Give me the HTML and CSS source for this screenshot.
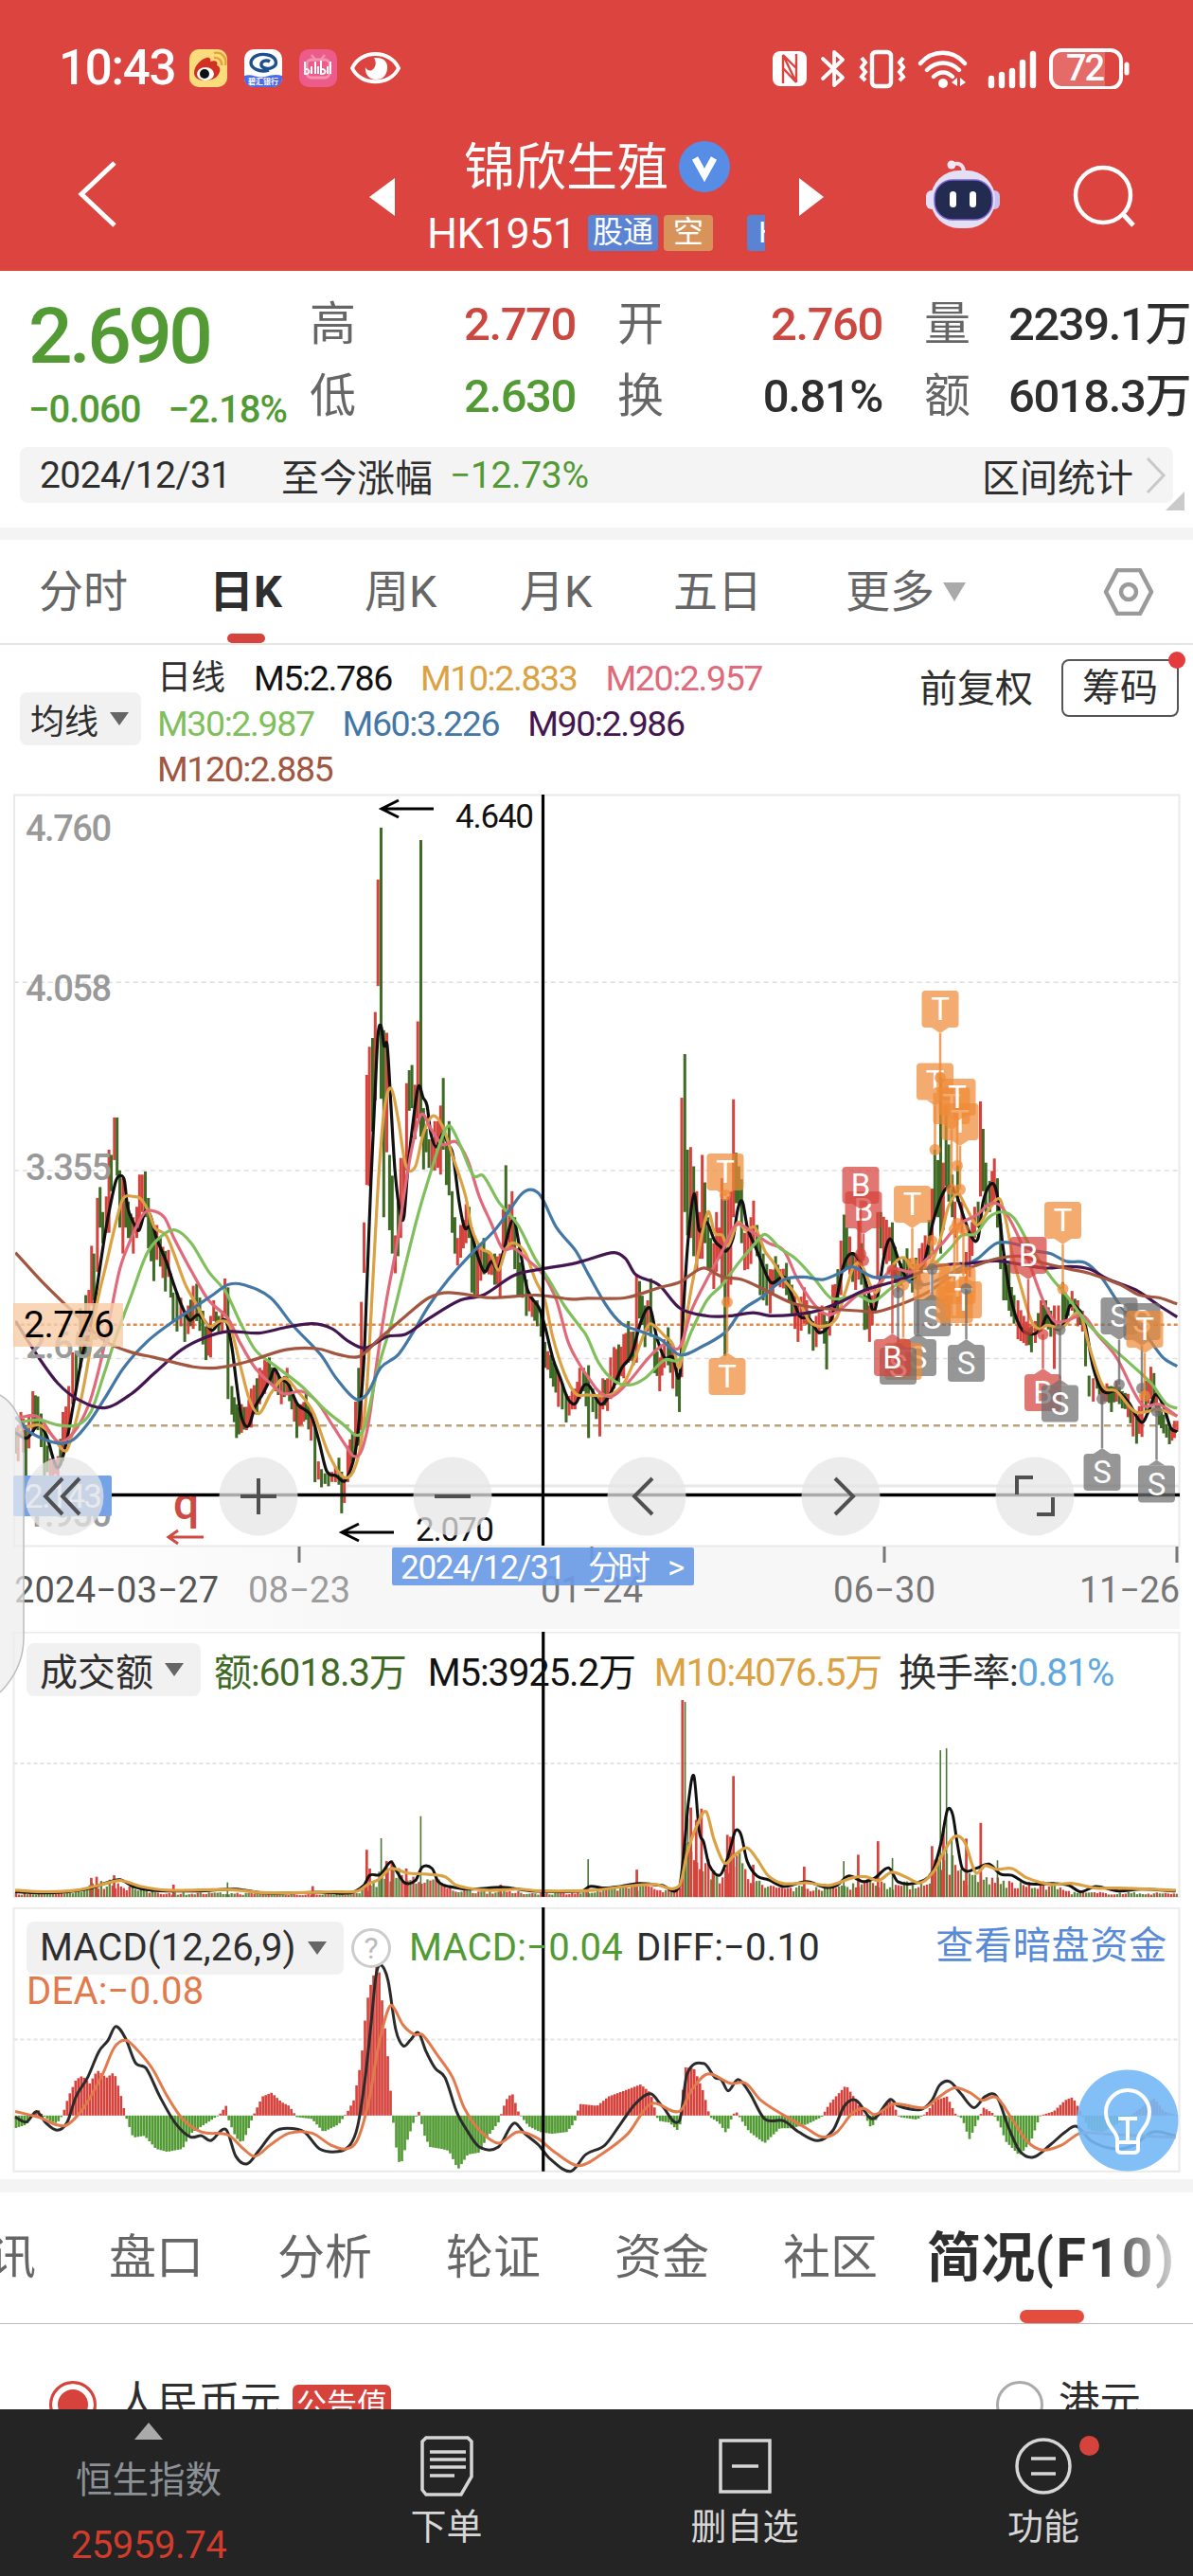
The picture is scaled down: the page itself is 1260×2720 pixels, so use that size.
FILE: index.html
```html
<!DOCTYPE html>
<html lang="zh-CN">
<head>
    <meta charset="utf-8">
    <meta name="viewport" content="width=device-width, initial-scale=1">
    <title>锦欣生殖 HK1951</title>
    <link rel="stylesheet" href="styles.css">
</head>
<body>
<div class="app">
    <header class="top">
        <div class="status">
            <span class="clock">10:43</span>
            <svg class="st-left" width="240" height="44" viewBox="0 0 240 44">
                <rect x="0" y="2" width="40" height="40" rx="10" fill="#fbdc7c"/>
                <path d="M5 27c0-8 8-15 13-16 4-1 5 2 4 4 5-2 9 0 7 4 4 1 4 6 2 9-3 6-10 7-15 7-6 0-11-3-11-8z" fill="#d32f23"/>
                <ellipse cx="17" cy="28" rx="9" ry="7" fill="#fff"/>
                <circle cx="16" cy="28" r="5" fill="#111"/>
                <path d="M26 11c5-1 9 4 8 8M26 6c9-2 14 6 12 13" fill="none" stroke="#e5a23a" stroke-width="2.4"/>
                <rect x="58" y="2" width="40" height="40" rx="10" fill="#fff"/>
                <path d="M58 30c8-3 14 3 22 1 7-2 12-3 18-1v2c0 6-4 10-10 10H68c-6 0-10-4-10-10z" fill="#4b6be8"/>
                <path d="M84 24c-10 3-19-2-19-8 1-7 10-10 18-8 9 2 11 10 5 13-5 3-13 1-12-4 1-3 6-4 9-2" fill="none" stroke="#1e4f8e" stroke-width="3.4"/>
                <text x="62" y="39" class="tiny-app">碧汇银行</text>
                <rect x="116" y="2" width="40" height="40" rx="10" fill="#ec5b8a"/>
                <rect x="124" y="13" width="24" height="19" rx="5" fill="none" stroke="#f393b1" stroke-width="3"/>
                <path d="M129 8l4 5M143 8l-4 5" stroke="#f393b1" stroke-width="2.5"/>
                <path d="M122 15v13c6 1 6-6 0-5M129 20v8M133 15v13M136 20v8M139 14v14c6 1 6-6 0-5M146 20v8M149 15v13" fill="none" stroke="#fff" stroke-width="2"/>
                <path d="M172 22c9-20 40-20 49 0-9 19-40 19-49 0z" fill="none" stroke="#fff" stroke-width="4"/>
                <path d="M195 11c11-1 15 5 14 12-1 8-6 11-12 11-7 0-12-6-11-13 2 4 5 4 7 3 4-3 5-8 2-13z" fill="#fff"/>
            </svg>
            <svg class="st-right" width="380" height="44" viewBox="0 0 380 44" fill="none" stroke="#fff">
                <rect x="0" y="4" width="36" height="37" rx="8" fill="#fff" stroke="none"/>
                <path d="M11 38V8l14 29M11 8l14 14M25 37V7M11 22l14 15" stroke="#dc443f" stroke-width="2.4"/>
                <path d="M53 12l21 20-9 8V5l9 8-21 20" stroke-width="3.8" stroke-linecap="round" stroke-linejoin="round"/>
                <rect x="105" y="5" width="20" height="36" rx="4" stroke-width="4.4"/>
                <path d="M94 11l4 5-4 5 4 5-4 5 4 4M138 11l-4 5 4 5-4 5 4 5-4 4" stroke-width="4"/>
                <path d="M156 17c13-15 34-15 47 0M163 24c10-10 24-10 34 0M170 31c6-6 14-6 20 0" stroke-width="4.4" stroke-linecap="round"/>
                <circle cx="180" cy="38" r="5" fill="#fff" stroke="none"/>
                <path d="M195 32v9l-6-4zM198 32v9l6-4z" fill="#fff" stroke="none"/>
                <path d="M231 33v7M242 29v11M253 25v15M264 16v24M275 7v33" stroke-width="6.4" stroke-linecap="round"/>
                <rect x="295" y="5" width="56" height="36" fill="#e46b68" stroke="none"/>
                <rect x="294" y="3" width="74" height="40" rx="11" stroke-width="4"/>
                <path d="M374 18v9" stroke-width="5" stroke-linecap="round"/>
                <text x="310" y="35" class="batt" textLength="41">72</text>
            </svg>
        </div>
        <div class="titlebar">
            <svg class="back" width="44" height="72" viewBox="0 0 44 72"><path d="M40 3L5 36l35 33" fill="none" stroke="#fff" stroke-width="5"/></svg>
            <svg class="prev" width="28" height="42" viewBox="0 0 28 42"><path d="M27 1v40L0 21z" fill="#fff"/></svg>
            <div class="name">
                <div class="name-row">锦欣生殖
                    <svg width="54" height="54" viewBox="0 0 54 54"><circle cx="27" cy="27" r="27" fill="#588de6"/><path d="M17 18l10 18 10-18" fill="none" stroke="#fff" stroke-width="7"/></svg>
                </div>
                <div class="code-row"><span class="code">HK1951</span><b class="tag blue">股通</b><b class="tag gold">空</b><b class="tag blue cut">H</b></div>
            </div>
            <svg class="next" width="28" height="42" viewBox="0 0 28 42"><path d="M1 1v40l26-20z" fill="#fff"/></svg>
            <svg class="robot" width="80" height="76" viewBox="0 0 80 76">
                <path d="M28 6c8-3 13 0 13 9" fill="none" stroke="#f0dfee" stroke-width="4"/>
                <circle cx="28" cy="6" r="4.5" fill="#f3e9f5"/>
                <rect x="1" y="33" width="14" height="20" rx="6" fill="#e6ddf6"/><rect x="65" y="33" width="14" height="20" rx="6" fill="#c9c2f0"/>
                <rect x="6" y="12" width="68" height="61" rx="30" fill="#e3dff5"/>
                <rect x="10" y="22" width="61" height="42" rx="19" fill="#232c50" stroke="#7f63d8" stroke-width="1.5"/>
                <rect x="26" y="34" width="7" height="17" rx="3.5" fill="#fff"/><rect x="47" y="34" width="7" height="17" rx="3.5" fill="#fff"/>
            </svg>
            <svg class="search" width="68" height="68" viewBox="0 0 68 68"><circle cx="32" cy="32" r="29" fill="none" stroke="#fff" stroke-width="4.5"/><path d="M53 52l11 12" stroke="#fff" stroke-width="5"/></svg>
        </div>
    </header>

    <section class="quote">
        <div class="quote-grid">
            <div class="price">2.690</div>
            <span class="lb">高</span><span class="v up">2.770</span>
            <span class="lb">开</span><span class="v up">2.760</span>
            <span class="lb">量</span><span class="v">2239.1万</span>
            <div class="diff"><span>−0.060</span><span>−2.18%</span></div>
            <span class="lb">低</span><span class="v down">2.630</span>
            <span class="lb">换</span><span class="v">0.81%</span>
            <span class="lb">额</span><span class="v">6018.3万</span>
        </div>
        <div class="range">
            <span class="r-date">2024/12/31</span><span class="r-label">至今涨幅</span><span class="down">−12.73%</span>
            <span class="r-stat">区间统计</span>
            <svg width="24" height="40" viewBox="0 0 24 40"><path d="M3 2l17 18L3 38" fill="none" stroke="#c8c8c8" stroke-width="3"/></svg>
            <i class="corner"></i>
        </div>
    </section>

    <nav class="periods">
        <span>分时</span><span class="on">日K</span><span>周K</span><span>月K</span><span>五日</span>
        <span class="more">更多<i class="tri"></i></span>
        <svg width="54" height="50" viewBox="0 0 54 50" fill="none" stroke="#9a9a9a" stroke-width="4.5" stroke-linejoin="round"><path d="M15 2h24l12 23-12 23H15L3 25z"/><circle cx="27" cy="25" r="8"/></svg>
    </nav>

    <section class="ma">
        <span class="drop">均线<i class="tri dark"></i></span>
        <div class="ma-list">
            <div><span class="ma-name">日线</span><span class="c5">M5:2.786</span><span class="c10">M10:2.833</span><span class="c20">M20:2.957</span></div>
            <div><span class="c30">M30:2.987</span><span class="c60">M60:3.226</span><span class="c90">M90:2.986</span></div>
            <div><span class="c120">M120:2.885</span></div>
        </div>
        <span class="fq">前复权</span>
        <span class="chip">筹码<i class="dot"></i></span>
    </section>

    <section class="kline">
        <svg id="kdata" class="layer" viewBox="0 14.6 3087 1608" preserveAspectRatio="none"></svg>
        <svg id="kover" class="layer" viewBox="0 838 1260 882">
            <defs><linearGradient id="haze" x1="0" x2="1"><stop offset="0" stop-color="#fff"/><stop offset=".3" stop-color="#f7f7f7"/><stop offset="1" stop-color="#f7f7f7"/></linearGradient></defs>
            <rect x="15" y="1633" width="1231" height="87" fill="url(#haze)"/>
            <path d="M15 839.500H1245.500V1632.500H15z" fill="none" stroke="#eaeaea" stroke-width="2"/>
            <path d="M365 1569H1245" stroke="#e8e8e8" stroke-width="3"/>
            <g class="ylab">
                <text x="27" y="888" textLength="91">4.760</text>
                <text x="27" y="1057" textLength="91">4.058</text>
                <text x="27" y="1246" textLength="91">3.355</text>
                <text x="27" y="1434" textLength="91">2.652</text>
                <text x="27" y="1612" textLength="91">1.950</text>
            </g>
            <rect x="14" y="1376" width="116" height="46" fill="#f6cda7" fill-opacity=".82"/>
            <text x="25" y="1412" class="yprice" textLength="96">2.776</text>
            <g class="klab">
                <text x="481" y="874" textLength="83">4.640</text>
                <text x="439" y="1627" textLength="83">2.070</text>
            </g>
            <path d="M458 854H403M421 845l-18 9 18 9M416 1618H361M379 1609l-18 9 18 9" fill="none" stroke="#000" stroke-width="3"/>
            <text x="183" y="1604" class="qmark">q</text>
            <path d="M215 1623H178M188 1616l-10 7 10 7" fill="none" stroke="#cf4a42" stroke-width="3"/>
            <rect x="14" y="1558" width="104" height="43" rx="2" fill="#76a3e8"/>
            <text x="26" y="1592" class="xprice" textLength="82">2.143</text>
            <path d="M118 1578.500H1246" stroke="#000" stroke-width="3.500"/>
            <path d="M573.500 839V1632" stroke="#000" stroke-width="3.200"/>
            <path d="M316 1633v17M625 1633v17M934 1633v17M1243 1633v17" stroke="#777" stroke-width="3"/>
            <g class="xlab">
                <text x="15" y="1692" class="first" textLength="216">2024−03−27</text>
                <text x="262" y="1692" class="pale" textLength="108">08−23</text>
                <text x="571" y="1692" textLength="108">01−24</text>
                <text x="880" y="1692" textLength="108">06−30</text>
                <text x="1140" y="1692" textLength="106">11−26</text>
            </g>
            <g id="marks"></g>
            <rect x="414" y="1634" width="319" height="40" rx="2" fill="#6a9ae6" fill-opacity=".92"/>
            <text x="423" y="1667" class="pill" textLength="175">2024/12/31</text>
            <text x="621" y="1668" class="pill" textLength="66">分时</text>
            <text x="705" y="1667" class="pill">&gt;</text>
            <g fill="#e6e6e6" fill-opacity=".74">
                <circle cx="68" cy="1580" r="41.500"/><circle cx="273" cy="1580" r="41.500"/><circle cx="478" cy="1580" r="41.500"/>
                <circle cx="683" cy="1580" r="41.500"/><circle cx="888" cy="1580" r="41.500"/><circle cx="1093" cy="1580" r="41.500"/>
            </g>
            <path d="M66 1561l-18 19 18 19M84 1561l-18 19 18 19M254 1580h38M273 1561v38M459 1580h38M689 1561l-19 19 19 19M882 1561l19 19-19 19M1074 1578v-18h17M1112 1581v18h-17" fill="none" stroke="#505050" stroke-width="4"/>
        </svg>
    </section>

    <section class="vol">
        <svg id="vdata" class="layer" viewBox="0 57.700 1568 736" preserveAspectRatio="none"></svg>
        <div class="legend">
            <span class="drop">成交额<i class="tri dark"></i></span>
            <span class="cg">额:6018.3万</span><span class="c5">M5:3925.2万</span><span class="c10">M10:4076.5万</span><span class="hs">换手率:<em>0.81%</em></span>
        </div>
    </section>

    <section class="macd">
        <svg id="mdata" class="layer" viewBox="0 795 1568 726" preserveAspectRatio="none"></svg>
        <div class="legend">
            <span class="drop">MACD(12,26,9)<i class="tri dark"></i></span>
            <span class="help">?</span>
            <span class="down">MACD:−0.04</span><span class="c0">DIFF:−0.10</span><span class="link">查看暗盘资金</span>
        </div>
        <div class="dea">DEA:−0.08</div>
        <svg class="bulb" width="108" height="108" viewBox="0 0 108 108" fill="none" stroke="#fff" stroke-width="4">
            <circle cx="54" cy="54" r="53.500" fill="#74b8f5" fill-opacity=".9" stroke="none"/>
            <path d="M43 74c0-9-12-13-12-29a23 23 0 0 1 46 0c0 16-12 20-12 29v10c0 3-2 4-5 4H48c-3 0-5-1-5-4zM43 77h22M44 52h20M54 52v23"/>
        </svg>
    </section>
    <div class="band"></div>

    <nav class="tabs">
        <span class="clip">讯</span><span>盘口</span><span>分析</span><span>轮证</span><span>资金</span><span>社区</span><span class="on">简况<em>(F10)</em></span>
    </nav>
    <section class="currency">
        <i class="radio checked"></i><span>人民币元</span><b>公告值</b>
        <i class="radio hk"></i><span>港元</span>
    </section>

    <footer class="bottom">
        <div class="index"><i class="up-tri"></i><span>恒生指数</span><strong>25959.74</strong></div>
        <div class="act">
            <svg width="60" height="66" viewBox="0 0 60 66" fill="none" stroke="#d6d6d6" stroke-width="3.500"><path d="M8 3h44l4 4v37L45 63H8l-4-5V7zM12 18h38M12 26h38M12 34h38M12 43h26"/></svg>
            <span>下单</span>
        </div>
        <div class="act">
            <svg width="60" height="66" viewBox="0 0 60 66" fill="none" stroke="#d6d6d6" stroke-width="3.500"><path d="M4 6h52v54H4zM16 33h28"/></svg>
            <span>删自选</span>
        </div>
        <div class="act">
            <svg width="60" height="66" viewBox="0 0 60 66" fill="none" stroke="#d6d6d6" stroke-width="3.500"><circle cx="30" cy="33" r="28"/><path d="M17 25h26M17 41h26"/></svg>
            <span>功能</span><i class="dot"></i>
        </div>
    </footer>
    <svg class="edge" width="28" height="330" viewBox="0 0 28 330"><path d="M0 8C14 16 25 34 25 58V264C25 288 14 308 0 322" fill="#ededed" fill-opacity=".72" stroke="#bdbdbd" stroke-width="1.500"/></svg>
</div>
<script src="script.js"></script>
</body>
</html>
```
FILE: styles.css
```css
*
{
    margin: 0;
    padding: 0;
    box-sizing: border-box;
}
body
{
    width: 1260px;
    background: #fff;
    color: #2e2e2e;
    font-family: Roboto, "Noto Sans CJK SC", sans-serif;
    overflow-x: hidden;
}
.app
{
    position: relative;
    width: 1260px;
    height: 2720px;
    overflow: hidden;
    display: flex;
    flex-direction: column;
}
i, em { font-style: normal; }
svg { display: block; flex: none; }
span { white-space: nowrap; }
.up { color: #cb4740; }
.down { color: #529a34; }

/* header */
.top
{
    height: 286px;
    background: #dc443f;
    color: #fff;
}
.status
{
    height: 140px;
    padding: 50px 64px 0 62px;
    display: flex;
    align-items: flex-start;
}
.clock
{
    width: 138px;
    font-size: 51px;
    font-weight: 500;
    line-height: 44px;
    letter-spacing: -1.2px;
}
.st-left { margin-right: auto; }
.tiny-app { font-size: 8px; font-weight: bold; fill: #fff; }
.batt { font-size: 38px; font-weight: 500; fill: #fff; stroke: none; }
.titlebar
{
    height: 146px;
    display: flex;
    align-items: flex-start;
}
.back { margin: 29px 0 0 81px; }
.prev { margin: 47px 0 0 265px; }
.name
{
    width: 375px;
    margin: 5px 0 0 33px;
}
.name-row
{
    height: 66px;
    padding-left: 39px;
    font-size: 54px;
    line-height: 60px;
    display: flex;
    align-items: center;
    gap: 11px;
}
.name-row svg { margin-top: -5px; }
.code-row
{
    height: 70px;
    width: 357px;
    overflow: hidden;
    display: flex;
    align-items: center;
}
.code { font-size: 45px; width: 169px; letter-spacing: -0.7px; flex: none; }
.tag
{
    height: 38px;
    border-radius: 4px;
    padding: 0 5px;
    font-size: 32px;
    line-height: 36px;
    font-weight: 400;
    white-space: nowrap;
    flex: none;
}
.blue { background: #5b83d4; }
.tag.blue:nth-child(2) { margin-left: 1px; }
.gold { background: #d8935a; margin-left: 6px; padding: 0 10px; }
.cut { margin-left: 36px; width: 32px; padding-left: 12px; }
.next { margin: 47px 0 0 17px; }
.robot { margin: 28px 0 0 106px; }
.search { margin: 34px 0 0 76px; }

/* quote */
.quote { height: 271px; }
.quote-grid
{
    height: 186px;
    padding: 19px 0 0 30px;
    display: grid;
    grid-template-columns: 297px 50px 231px 50px 230px 50px 230px;
    grid-template-rows: 76px 76px;
    align-items: center;
}
.v + .lb { margin-left: 44px; }
.quote-grid { grid-template-columns: 297px 50px 231px 94px 230px 94px 231px; }
.lb { font-size: 49px; line-height: 60px; color: #666; }
.v
{
    font-size: 49px;
    line-height: 60px;
    letter-spacing: -1.4px;
    font-weight: 500;
    text-align: right;
}
.price
{
    font-size: 82px;
    line-height: 84px;
    font-weight: 500;
    letter-spacing: -3.6px;
    color: #529a34;
    padding-top: 24px;
}
.diff
{
    display: flex;
    gap: 29px;
    font-size: 40px;
    letter-spacing: -1px;
    font-weight: 500;
    color: #529a34;
    padding-top: 27px;
}
.range
{
    position: relative;
    height: 59px;
    margin: 0 21px;
    padding: 0 6px 0 21px;
    border-radius: 8px;
    background: #f4f4f4;
    display: flex;
    align-items: center;
    font-size: 40px;
}
.r-date { width: 255px; font-size: 39px; letter-spacing: -0.6px; }
.r-label { width: 178px; }
.r-stat { margin-left: auto; margin-right: 12px; }
.range .down { font-size: 39px; letter-spacing: -0.3px; }
.corner
{
    position: absolute;
    right: -12px;
    bottom: -8px;
    border-left: 20px solid transparent;
    border-bottom: 20px solid #cacaca;
}

/* period tabs */
.periods
{
    height: 124px;
    border-top: 13px solid #f4f4f4;
    border-bottom: 2px solid #e6e6e6;
    padding-left: 41px;
    display: flex;
    align-items: center;
    font-size: 47px;
    color: #666;
}
.periods span { line-height: 109px; position: relative; }
.periods span:nth-child(1) { width: 180px; }
.periods span:nth-child(2) { width: 164px; }
.periods span:nth-child(3) { width: 164px; }
.periods span:nth-child(4) { width: 162px; }
.periods span:nth-child(5) { width: 182px; }
.periods .more { width: 272px; display: flex; align-items: center; gap: 9px; }
.periods .on { color: #2e2e2e; font-weight: 700; }
.periods .on::after
{
    content: "";
    position: absolute;
    left: 19px;
    bottom: 0;
    width: 40px;
    height: 10px;
    border-radius: 5px;
    background: #d5433c;
}
.tri
{
    display: inline-block;
    border: 12px solid transparent;
    border-top: 20px solid #aaa;
    border-bottom: 0;
}
.tri.dark { border-width: 14px 10px 0; border-top-color: #666; }

/* moving averages */
.ma
{
    height: 157px;
    padding: 10px 0 0 21px;
    display: flex;
    align-items: flex-start;
}
.drop
{
    height: 56px;
    border-radius: 8px;
    background: #f1f1f1;
    display: flex;
    align-items: center;
    font-size: 36px;
}
.ma .drop { width: 128px; padding-left: 11px; gap: 12px; margin-top: 40px; }
.ma-list { width: 785px; padding-left: 17px; margin-top: 1px; font-size: 37.5px; letter-spacing: -1.4px; }
.ma-list div { height: 48px; line-height: 48px; display: flex; gap: 30px; }
.ma-name { font-size: 36px; letter-spacing: 0; }
.c5 { color: #111; }
.c10 { color: #dca142; }
.c20 { color: #e0697a; }
.c30 { color: #7fbf5c; }
.c60 { color: #4377a6; }
.c90 { color: #43164f; }
.c120 { color: #a2553f; }
.fq { margin: 9px 0 0 37px; font-size: 40px; line-height: 56px; }
.chip
{
    position: relative;
    width: 124px;
    height: 61px;
    margin: 5px 0 0 30px;
    border: 2px solid #555;
    border-radius: 8px;
    font-size: 40px;
    line-height: 58px;
    text-align: center;
}
.dot
{
    position: absolute;
    width: 18px;
    height: 18px;
    border-radius: 50%;
    background: #e23c3c;
    right: -9px;
    top: -10px;
}

/* charts */
.kline { position: relative; height: 882px; }
.vol { position: relative; height: 294px; padding-top: 1px; }
.vol .layer { top: 3px; height: 291px; }
.macd { position: relative; height: 287px; padding-top: 1px; }
.layer
{
    position: absolute;
    left: 0;
    top: 0;
    width: 1260px;
    height: 100%;
}
.layer path { vector-effect: non-scaling-stroke; }
.ylab { font-size: 38px; font-weight: 500; fill: #999; }
.yprice { font-size: 39px; fill: #000; }
.xprice { font-size: 35px; fill: #eef4ff; }
.klab { font-size: 35px; fill: #111; }
.qmark { font-size: 48px; font-weight: 500; fill: #cf4a42; }
.xlab { font-size: 38px; fill: #777; }
.xlab .first { fill: #555; }
.xlab .pale { fill: #9c9c9c; }
.pill { font-size: 35px; fill: #fff; }
.mk { font-size: 33px; fill: #fff; text-anchor: middle; }
.legend
{
    position: relative;
    height: 83px;
    padding-left: 28px;
    display: flex;
    align-items: center;
    font-size: 40px;
    letter-spacing: -1.1px;
}
.legend .drop { font-size: 40px; padding-left: 14px; gap: 12px; letter-spacing: 0; }
.vol .drop { width: 184px; margin-right: 14px; }
.vol .c5 { margin-left: 23px; }
.vol .c10 { margin-left: 20px; }
.vol .hs { margin-left: 18px; }
.cg { color: #3f6a26; }
.hs em { color: #5ea7e0; }
.macd .legend { letter-spacing: 0; }
.macd .drop { width: 335px; margin-right: 8px; letter-spacing: 0.1px; }
.help
{
    width: 42px;
    height: 42px;
    border: 3px solid #ccc;
    border-radius: 50%;
    color: #bbb;
    font-size: 32px;
    line-height: 36px;
    text-align: center;
}
.macd .down { margin-left: 19px; letter-spacing: 0.2px; }
.c0 { margin-left: 14px; letter-spacing: 0.2px; }
.link { color: #588ad8; margin-left: auto; margin-right: 27px; letter-spacing: 0.8px; line-height: 52px; padding-bottom: 3px; }
.dea { position: relative; color: #e27a4c; font-size: 40px; line-height: 44px; letter-spacing: 0.2px; padding-left: 28px; margin-top: -17px; }
.bulb { position: absolute; left: 1137px; top: 171px; }
.band { height: 14px; background: #f4f4f4; }

/* section tabs */
.tabs
{
    height: 139px;
    border-bottom: 1px solid #bbb;
    display: flex;
    font-size: 50px;
    color: #666;
    line-height: 139px;
}
.tabs span { width: 178px; flex: none; }
.tabs .clip { width: 115px; text-indent: -12px; }
.tabs span:nth-child(6) { width: 152px; }
.tabs .on
{
    position: relative;
    width: 281px;
    font-size: 57px;
    font-weight: 700;
    background: linear-gradient(to right, #2e2e2e 64%, #ddd 95%);
    -webkit-background-clip: text;
    -webkit-text-fill-color: transparent;
}
.tabs .on em { letter-spacing: 2.6px; }
.tabs .on::after
{
    content: "";
    position: absolute;
    left: 98px;
    bottom: 0;
    width: 68px;
    height: 14px;
    border-radius: 7px;
    background: #e44d3e;
}
.currency
{
    height: 90px;
    overflow: hidden;
    display: flex;
    padding: 58px 0 0 52px;
    font-size: 43.5px;
    line-height: 50px;
}
.currency b
{
    height: 42px;
    margin: 6px 0 0 12px;
    padding: 0 4px;
    border-radius: 6px;
    background: #d5433c;
    color: #fff;
    font-size: 32px;
    line-height: 42px;
    font-weight: 400;
}
.radio
{
    width: 50px;
    height: 50px;
    margin: 2px 21px 0 0;
    border: 3px solid #aaa;
    border-radius: 50%;
    flex: none;
}
.checked { border-color: #d5433c; background: #d5433c; box-shadow: inset 0 0 0 6px #fff; }
.hk { margin-left: auto; margin-right: 16px; }
.currency span:last-child { width: 142px; }

/* footer */
.bottom
{
    height: 176px;
    background: #242424;
    color: #d6d6d6;
    display: grid;
    grid-template-columns: 314px 315px 315px 316px;
    font-size: 38px;
}
.index { display: flex; flex-direction: column; align-items: center; padding-top: 14px; }
.index span { color: #8b9196; font-size: 38.5px; line-height: 56px; margin-top: 15px; }
.index strong { color: #d23c2c; font-weight: 400; font-size: 40px; line-height: 48px; margin-top: 17px; letter-spacing: -0.4px; }
.up-tri { border: 15px solid transparent; border-top: 0; border-bottom: 18px solid #aaa; }
.act { position: relative; display: flex; flex-direction: column; align-items: center; padding-top: 27px; }
.act span { line-height: 56px; margin-top: 3px; }
.act .dot { width: 21px; height: 21px; right: 99px; top: 28px; background: #d5433c; }
.edge { position: absolute; left: 0; top: 1465px; }
```
FILE: script.js
```js
const RED = '#d5433c', GREEN = '#3f6a26';
const HALF = 1519; // x offset of the second half of the k-line data

let seed = 7;
function rnd() {
    seed = (seed * 16807) % 2147483647;
    return seed / 2147483647;
}
function nums(s) { return s.trim().split(/\s+/).map(p => p.split(',')); }
function joinHalves(a, b) {
    return nums(a).concat(nums(b).map(p => [+p[0] + HALF].concat(p.slice(1))));
}
// smooth curve through the points
function curve(pts) {
    pts = pts.map(p => [+p[0], +p[1]]);
    let d = 'M' + pts[0];
    for (let i = 0; i < pts.length - 1; i++) {
        const a = pts[i - 1] || pts[i], b = pts[i], c = pts[i + 1], e = pts[i + 2] || c;
        const h = (c[0] - b[0]) / 3;
        let s1 = (c[1] - a[1]) / ((c[0] - a[0]) || 1), s2 = (e[1] - b[1]) / ((e[0] - b[0]) || 1);
        d += 'C' + [b[0] + h, b[1] + s1 * h, c[0] - h, c[1] - s2 * h, c[0], c[1]].map(n => n.toFixed(1));
    }
    return d;
}
function line(pts, color, w) {
    return `<path d="${curve(pts)}" fill="none" stroke="${color}" stroke-width="${w}" stroke-linejoin="round"/>`;
}
function dash(x1, x2, y, color, w, pat) {
    return `<path d="M${x1} ${y}H${x2}" stroke="${color}" stroke-width="${w}" stroke-dasharray="${pat}"/>`;
}
function bar(x, y1, y2, w, color) {
    return `<rect x="${(x - w / 2).toFixed(1)}" y="${y1.toFixed(1)}" width="${w}" height="${Math.max(2, y2 - y1).toFixed(1)}" fill="${color}"/>`;
}
function at(pts, x, k) {
    for (let i = 1; i < pts.length; i++) {
        if (x <= +pts[i][0]) {
            const a = pts[i - 1], b = pts[i], t = (x - a[0]) / (b[0] - a[0]);
            return +a[k] + t * (b[k] - a[k]);
        }
    }
    return +pts[pts.length - 1][k];
}

// candles: x,high,low[,colour]
const candles = joinHalves(
`40,1235,1285,g 47,1230,1300,r 54,1205,1250,r 67,1230,1345,g 75,1210,1275,r 85,1165,1240,r 98,1175,1240,g 115,1230,1330,g 130,1295,1330,r 150,1290,1330,r 163,1205,1300,r 178,1155,1240,r 188,1090,1190,r 197,1090,1160,g 208,1005,1120,g 222,980,1100,g 230,970,1070,r 237,885,1000,r 243,900,990,g 252,793,935,r 259,772,850,g 266,820,880,g 275,790,860,r 282,700,860,r 288,710,780,g 296,638,720,r 303,638,750,g 310,740,850,g 318,755,900,r 325,790,850,g 332,800,870,g 345,830,900,r 354,810,870,r 361,748,855,r 368,748,820,r 376,742,830,g 384,793,890,g 398,850,953,g 406,845,912,r 415,870,925,g 428,895,973,g 436,893,945,r 448,975,1030,g 458,975,1050,g 468,985,1040,r 478,1010,1070,g 487,1000,1055,r 500,962,1045,r 509,958,1030,g 525,1010,1075,g 533,1040,1105,g 545,1020,1100,r 553,990,1030,r 566,1020,1050,g 575,1010,1050,r 582,948,1020,r 590,965,1180,g 600,1155,1210,g 612,1190,1255,g 625,1190,1245,r 638,1195,1240,r 650,1160,1235,r 665,1140,1210,g 672,1120,1190,r 685,1105,1170,r 697,1100,1150,g 712,1120,1165,r 728,1145,1190,r 743,1120,1170,r 755,1165,1200,g 768,1190,1255,g 780,1190,1230,r 792,1170,1220,g 805,1200,1260,r 815,1230,1340,g 824,1300,1335,r 832,1315,1350,g 850,1320,1348,g 868,1310,1340,r 877,1293,1345,g 884,1320,1400,g 891,1330,1380,r 900,1270,1340,r 912,1245,1300,g 920,1185,1290,r 928,1120,1270,g 935,993,1240,r 942,840,937,r 949,556,768,r 956,502,770,r 964,485,665,g 971,435,605,r 978,180,385,r 986,80,602,g 993,470,830,g 1001,475,705,r 1008,710,855,g 1015,750,900,g 1023,865,938,r 1030,800,905,g 1037,716,870,r 1045,715,830,r 1052,572,740,r 1059,547,625,g 1066,537,620,g 1074,575,680,r 1081,453,640,r 1089,104,675,g 1096,620,738,g 1103,660,705,g 1110,680,735,g 1118,680,740,r 1125,645,740,r 1133,645,735,r 1140,615,748,r 1147,562,700,g 1155,690,768,g 1162,645,788,g 1170,780,860,g 1177,830,900,g 1184,870,923,r 1192,845,908,r 1199,835,890,r 1206,805,880,r 1214,810,870,g 1221,850,975,g 1228,880,980,g 1236,890,985,r 1252,870,940,g 1265,900,940,r 1280,900,960,g 1294,900,985,r 1302,815,900,r 1309,730,890,g 1318,805,890,r 1325,780,890,r 1332,830,930,g 1340,890,980,g 1352,930,985,g 1362,950,1020,g 1377,985,1022,r 1390,990,1040,g 1400,1010,1060,g 1410,1070,1120,g 1425,1095,1140,g 1445,1130,1195,r 1455,1150,1200,g 1465,1170,1225,g 1488,1160,1200,r 1500,1120,1180,r 1510,1120,1165,g`,
`4,1115,1255,g 15,1160,1205,g 33,1165,1252,r 41,1140,1200,r 53,1140,1203,r 61,1100,1180,r 70,1080,1160,r 82,1075,1150,g 95,1055,1140,r 107,1030,1110,g 120,1050,1115,g 128,940,1110,r 136,953,1025,g 150,1000,1080,g 157,990,1050,r 165,948,1060,g 175,1060,1130,g 188,1100,1165,r 200,1065,1120,r 210,1042,1115,g 222,1090,1160,r 232,1120,1175,g 239,1130,1205,g 245,600,1138,r 253,516,820,g 260,700,865,g 268,695,870,r 276,732,905,g 284,780,930,r 291,820,910,r 298,710,910,r 305,763,880,g 313,830,930,g 320,870,940,g 328,880,968,r 335,820,935,r 342,850,910,r 349,755,960,r 357,795,1097,g 365,790,1000,r 372,780,960,r 379,603,830,r 386,706,803,g 393,732,805,g 400,757,880,g 408,860,932,r 416,850,930,r 424,830,920,r 431,798,880,r 440,845,905,g 448,870,980,g 456,900,990,g 465,920,1000,g 474,930,1015,r 488,905,960,g 500,930,965,r 516,918,980,g 530,960,1020,g 538,980,1045,r 546,1000,1070,r 562,965,1035,r 575,1010,1055,g 585,1030,1087,g 593,1020,1080,r 608,1000,1045,r 620,1030,1123,g 628,1010,1058,r 636,960,1030,r 649,930,1010,g 657,875,980,r 665,825,930,g 672,850,930,g 680,867,940,r 695,900,970,r 703,818,950,r 710,880,960,g 718,940,1047,g 731,1000,1070,r 745,960,1010,r 752,820,950,r 760,820,890,g 775,835,920,r 790,840,945,g 805,930,975,r 828,890,950,g 842,920,975,g 860,890,960,r 875,865,930,r 885,835,910,g 893,775,895,r 900,700,825,g 908,720,830,g 915,561,900,g 922,725,855,r 929,618,770,g 936,690,800,g 945,748,830,g 952,800,870,r 959,730,800,g 970,800,860,r 981,897,972,r 990,865,945,r 1003,810,870,r 1012,800,850,g 1018,607,790,r 1025,660,780,g 1032,725,820,g 1042,760,820,g 1054,717,800,r 1062,755,850,g 1070,840,930,g 1078,900,990,g 1092,920,1010,g 1105,980,1035,g 1115,990,1065,r 1130,1020,1072,r 1150,1040,1090,g 1160,1030,1072,r 1175,990,1050,r 1187,990,1040,g 1200,1010,1060,g 1209,1000,1122,r 1220,1000,1050,r 1231,955,1040,g 1245,985,1020,g 1255,972,1010,r 1270,990,1040,r 1282,1010,1050,r 1290,1040,1117,g 1299,1135,1175,g 1310,1140,1185,r 1320,1130,1160,g 1332,1150,1190,r 1345,1150,1185,r 1357,1155,1205,g 1370,1145,1185,r 1385,1165,1198,g 1400,1170,1215,r 1413,1200,1252,r 1422,1215,1266,g 1436,1160,1253,r 1446,1145,1205,g 1459,1118,1180,r 1467,1130,1190,g 1480,1190,1230,g 1492,1210,1246,g 1507,1235,1267,g 1520,1222,1255,r 1528,1222,1243,r`);

const averages = [
['#111',
'40,1245 70,1255 100,1230 120,1250 148,1312 170,1270 190,1190 215,1090 235,1040 252,960 268,880 282,820 300,760 312,750 322,760 330,810 345,840 360,855 375,820 388,825 405,870 430,915 450,960 470,1000 490,1028 512,1018 530,1030 548,1048 565,1035 585,1030 600,1080 612,1150 625,1215 643,1232 660,1195 680,1170 700,1140 710,1122 725,1140 745,1150 770,1190 805,1212 825,1260 845,1318 870,1328 892,1338 910,1310 922,1270 932,1200 942,1100 950,950 960,760 970,600 978,480 986,462 994,500 1002,500 1012,620 1022,740 1035,820 1045,830 1055,740 1070,640 1083,578 1095,600 1105,615 1115,670 1130,695 1145,670 1160,690 1172,710 1188,800 1202,850 1216,850 1230,890 1253,935 1272,915 1288,930 1305,890 1328,835 1345,890 1365,970 1395,1005 1410,1040 1430,1100 1450,1140 1470,1180 1490,1188 1510,1155',
'6,1155 35,1190 60,1170 90,1120 115,1095 140,1030 163,1005 180,1060 200,1100 222,1100 240,1135 250,1000 262,870 277,785 290,855 310,840 330,875 347,888 360,895 378,870 390,815 402,800 415,850 440,895 475,955 510,945 530,980 550,1020 575,1025 600,1052 628,1035 645,990 665,920 685,900 705,915 725,965 742,1012 755,970 770,900 785,872 805,910 825,945 850,945 875,910 895,840 920,785 940,770 955,785 975,830 995,868 1012,870 1025,800 1048,765 1062,790 1075,880 1095,980 1120,1040 1150,1055 1175,1045 1190,1020 1215,1045 1235,1035 1250,1000 1275,1010 1290,1040 1310,1120 1335,1165 1370,1165 1400,1185 1435,1225 1455,1200 1470,1172 1490,1190 1510,1235 1527,1243'],
['#dca142',
'50,1240 100,1230 135,1250 170,1280 190,1240 210,1180 230,1100 250,1000 275,920 300,840 318,795 345,790 365,795 385,820 400,850 430,865 450,900 480,960 510,1000 540,1040 570,1030 595,1040 620,1110 645,1180 670,1208 700,1170 735,1140 770,1165 810,1205 850,1285 888,1330 915,1318 935,1260 950,1150 965,950 980,750 995,620 1012,582 1030,640 1050,730 1075,732 1095,670 1120,635 1145,655 1170,710 1205,790 1220,850 1245,890 1270,900 1290,932 1310,890 1332,880 1360,900 1385,950 1410,990 1430,1060 1460,1130 1490,1170',
'0,1172 60,1172 95,1150 120,1110 150,1050 165,1035 200,1058 222,1075 240,1118 260,1010 285,910 313,820 330,860 350,865 365,885 390,840 410,855 435,850 460,895 480,915 510,950 545,985 575,1030 610,1040 645,1025 670,970 690,925 710,922 745,975 770,945 800,915 820,908 845,930 870,935 890,920 915,870 935,810 960,785 980,810 1010,845 1040,815 1068,795 1085,840 1100,900 1125,970 1150,1030 1170,1045 1190,1038 1230,1042 1275,1015 1300,1080 1335,1155 1370,1165 1420,1205 1480,1200 1527,1213'],
['#e0697a',
'50,1215 100,1215 150,1262 190,1245 230,1190 260,1110 285,1020 310,930 340,870 370,825 390,817 425,830 450,870 500,940 540,990 590,1025 620,1070 660,1120 700,1150 735,1170 780,1165 820,1185 860,1230 895,1270 915,1290 935,1280 955,1220 975,1110 1000,990 1025,890 1045,790 1065,700 1090,632 1115,660 1145,690 1180,685 1210,720 1240,790 1270,840 1300,890 1330,890 1370,915 1405,940 1440,990 1470,1070 1505,1120',
'0,1135 30,1165 65,1175 110,1145 160,1100 200,1075 240,1080 270,1010 310,950 350,895 385,845 430,860 470,880 510,895 545,950 590,1000 625,1018 660,1005 700,980 740,970 790,930 840,935 880,910 920,880 960,845 1010,825 1040,805 1070,808 1105,850 1140,910 1180,990 1210,1030 1245,1028 1285,1020 1320,1055 1370,1100 1435,1190 1480,1190 1527,1213'],
['#7fbf5c',
'50,1225 100,1220 150,1230 200,1230 235,1205 270,1130 300,1060 340,980 380,900 420,865 455,855 495,880 540,935 585,975 620,1030 660,1085 710,1115 780,1155 840,1200 890,1230 925,1250 945,1230 975,1130 1010,1040 1040,950 1080,830 1120,730 1150,665 1165,655 1190,690 1225,750 1250,750 1290,800 1340,845 1385,910 1420,950 1460,1000 1505,1045',
'0,1060 30,1110 70,1145 110,1153 150,1140 200,1105 240,1103 270,1050 310,990 350,960 390,920 430,885 460,863 500,890 540,910 590,950 630,985 670,985 700,980 740,992 790,965 840,945 890,925 940,890 970,865 1005,862 1040,830 1075,820 1105,832 1150,890 1200,945 1240,980 1290,1030 1350,1075 1410,1115 1460,1150 1500,1190 1527,1198'],
['#4377a6',
'40,1215 80,1245 150,1265 190,1258 230,1225 270,1180 320,1120 380,1070 440,1035 500,1005 550,980 590,960 630,960 700,985 760,1040 830,1095 870,1140 920,1180 950,1170 985,1120 1030,1095 1070,1050 1110,1000 1160,950 1220,900 1280,855 1320,815 1350,785 1375,777 1400,790 1440,850 1490,895',
'0,935 50,1000 90,1035 140,1050 190,1065 240,1095 300,1078 360,1050 400,1010 450,985 510,950 560,945 610,950 660,935 685,925 740,945 800,945 870,960 910,950 960,930 1010,910 1060,880 1110,882 1160,895 1200,900 1240,915 1290,918 1330,945 1380,1000 1440,1050 1490,1100 1527,1117'],
['#43164f',
'40,1030 100,1100 150,1150 200,1180 270,1197 340,1170 400,1130 470,1085 530,1062 590,1050 670,1053 740,1042 810,1035 860,1045 900,1068 945,1082 1000,1060 1050,1055 1110,1025 1190,990 1250,980 1330,942 1400,930 1480,920',
'0,912 70,898 100,910 125,940 185,960 240,1005 310,1020 370,1020 430,1014 480,1020 580,1013 650,995 720,970 790,955 850,940 900,925 1000,918 1060,914 1130,922 1190,928 1250,925 1300,930 1350,950 1420,970 1480,1000 1527,1022'],
['#a2553f',
'40,898 110,955 200,1020 270,1068 340,1090 400,1100 500,1118 560,1120 640,1108 740,1085 820,1083 880,1095 930,1098 980,1065 1050,1020 1110,985 1160,975 1270,985 1390,980 1480,988',
'0,986 100,985 190,965 240,955 300,928 350,945 400,950 460,970 530,995 600,1005 700,1010 750,1012 810,998 880,975 950,940 1000,925 1060,910 1120,905 1180,918 1250,930 1300,938 1380,960 1430,980 1480,985 1527,997']
];

function drawKline() {
    let s = '';
    [378, 740, 1102].forEach(y => { s += dash(36, 3052, y, '#dedede', 1.5, '5 4'); });
    s += dash(36, 3052, 1037, '#e08a4a', 2.5, '4 3');
    s += dash(240, 3052, 1231, '#b9a37c', 2.5, '7 5');
    for (let i = 0; i < candles.length; i++) {
        const c = candles[i], next = candles[i + 1];
        s += bar(+c[0], +c[1], +c[2], 7.4, c[3] === 'r' ? RED : GREEN);
        if (!next) continue;
        // days between two listed candles follow the trend
        const n = Math.round((next[0] - c[0]) / 7.35);
        for (let k = 1; k < n; k++) {
            const x = +c[0] + (next[0] - c[0]) * k / n;
            const hi = at([c, next], x, 1), lo = at([c, next], x, 2), span = lo - hi;
            const rising = +next[1] < +c[1];
            s += bar(x, hi + span * rnd() * 0.2, lo - span * rnd() * 0.2, 7.4, rnd() < (rising ? 0.75 : 0.3) ? RED : GREEN);
        }
    }
    averages.forEach(a => { s += line(joinHalves(a[1], a[2]), a[0], 3.2); });
    document.getElementById('kdata').innerHTML = s;
}

// trade marks: letter, centre x, box top, y of the traded price
const marks = [
    ['T', 766, 1218, 1262], ['T', 768, 1434, 1375], ['B', 912, 1258, 1331], ['B', 909, 1232, 1324],
    ['T', 963.5, 1252, 1334], ['S', 969.5, 1414, 1356], ['T', 954, 1418, 1357], ['S', 948.5, 1423, 1365], ['B', 942.5, 1414, 1341],
    ['T', 984, 1334, 1310], ['S', 984.5, 1372, 1340], ['T', 1008, 1358, 1298], ['T', 1011, 1338, 1292], ['T', 1017.5, 1353, 1298],
    ['S', 1020.5, 1420, 1361], ['T', 987.5, 1122.5, 1214], ['T', 1005, 1148, 1256], ['T', 1014, 1165, 1256], ['T', 1011, 1139, 1231], ['T', 993, 1046, 1138],
    ['B', 1086, 1306, 1404], ['T', 1122.5, 1269, 1361], ['B', 1101.5, 1451, 1409], ['S', 1119.5, 1462.5, 1404],
    ['S', 1182, 1370, 1462], ['S', 1206, 1376, 1466], ['T', 1209, 1384, 1474], ['S', 1164, 1535, 1477], ['S', 1221.5, 1547.5, 1490]
];
const markColor = { T: '#ee8a37', B: '#d5433c', S: '#6e6e6e' };

function drawMarks() {
    let s = '';
    marks.forEach(([t, x, top, y]) => {
        const c = markColor[t], below = y < top, edge = below ? top : top + 39, tip = below ? edge - 6 : edge + 6;
        s += `<g fill="${c}" fill-opacity=".72"><path d="M${x} ${tip}V${y}" stroke="${c}" stroke-opacity=".8" stroke-width="2.5"/>
        <circle cx="${x}" cy="${y}" r="6"/><rect x="${x - 19.5}" y="${top}" width="39" height="39" rx="4"/>
        <path d="M${x - 9} ${edge}L${x} ${tip}L${x + 9} ${edge}z"/></g><text class="mk" x="${x}" y="${top + 31}">${t}</text>`;
    });
    document.getElementById('marks').innerHTML = s;
}

const volume = nums('20,8 90,12 120,28 150,40 180,20 220,9 300,9 400,6 470,10 490,35 510,75 540,45 570,45 600,18 650,13 713,9 780,12 830,30 885,18 893,30 905,150 925,90 945,55 962,130 985,50 1010,25 1060,25 1100,28 1150,42 1180,30 1215,36 1240,120 1270,50 1300,48 1340,30 1380,32 1410,10 1548,9');
const volumePeaks = nums('120,715,r 127,712,r 150,708,r 228,733,r 299,727,g 411,737,r 482,640,r 486,690,r 501,609,g 508,670,r 515,668,r 534,690,r 553,550,g 658,733,r 773,665,g 837,693,r 897,240,r 900.5,245,g 904,555,g 908,527,r 915,560,r 922,530,r 937,700,r 956,600,r 960,605,r 964,443,r 990,680,r 1057,685,r 1109,670,g 1128,653,r 1154,617,r 1173,662,g 1225,630,r 1229,668,r 1236,374,g 1240,580,r 1244,369,g 1251,610,g 1270,610,r 1289,568,r 1311,668,g');

function drawVolume() {
    let s = '<path d="M18 59H1550V765H18z" fill="none" stroke="#eaeaea" stroke-width="2"/>' + dash(18, 1550, 409, '#e4e4e4', 2, '4 3');
    for (let x = 21; x < 1549; x += 3.73) {
        s += bar(x, 765 - at(volume, x, 1) * (0.55 + rnd() * 0.75), 766, 2.9, rnd() < 0.5 ? RED : '#63873f');
    }
    volumePeaks.forEach(p => { s += bar(+p[0], +p[1], 766, p[2] === 'r' ? 3.4 : 2, p[2] === 'r' ? RED : '#4d7536'); });
    s += line(nums('20,752 50,755 90,752 120,742 140,728 158,720 175,738 200,748 260,750 310,745 350,756 420,753 460,755 478,735 486,708 500,706 514,672 522,700 532,728 546,722 555,686 568,690 576,725 590,738 620,745 660,740 700,750 765,750 775,738 795,742 815,738 840,730 870,735 893,738 900,620 905,510 912,443 919,590 925,620 932,680 946,708 955,670 962,620 967,588 974,600 982,670 995,710 1010,720 1030,738 1060,725 1085,740 1100,735 1115,710 1135,725 1150,715 1168,688 1180,725 1205,728 1225,700 1237,620 1245,535 1252,545 1258,620 1265,690 1285,688 1300,678 1315,705 1330,708 1350,730 1385,730 1405,735 1420,752 1440,738 1470,750 1500,745 1545,750'), '#111', 3);
    s += line(nums('20,748 60,752 100,748 130,735 158,722 185,738 220,748 300,746 350,755 440,752 470,750 485,730 497,720 514,690 535,702 560,705 585,712 600,735 640,748 680,745 713,750 780,748 820,738 860,732 893,736 903,650 915,580 928,538 938,610 952,675 965,655 982,635 995,665 1010,710 1030,730 1060,728 1090,735 1120,715 1138,712 1155,722 1172,700 1190,712 1210,728 1228,695 1242,640 1255,604 1268,620 1282,700 1295,682 1310,692 1330,690 1350,715 1380,732 1410,730 1440,742 1470,742 1545,748'), '#dca142', 3.2);
    s += '<path d="M714 57V765" stroke="#000" stroke-width="3.2"/>';
    document.getElementById('vdata').innerHTML = s;
}

const hist = nums('20,1385 35,1375 44,1345 50,1335 56,1350 65,1365 75,1372 82,1351 90,1300 100,1255 108,1245 118,1265 128,1230 140,1250 150,1235 158,1290 165,1351 175,1410 190,1405 205,1440 220,1448 240,1440 250,1400 265,1380 280,1360 290,1345 297,1325 300,1360 310,1410 318,1425 325,1395 333,1351 345,1300 357,1290 370,1315 380,1325 390,1355 410,1360 425,1395 445,1375 457,1340 465,1310 475,1200 482,1050 488,995 497,940 503,1060 510,1200 516,1351 523,1475 528,1475 535,1420 545,1360 551,1340 557,1400 565,1435 580,1440 590,1445 602,1495 615,1455 630,1450 640,1410 655,1370 665,1310 673,1290 682,1345 695,1380 710,1395 725,1400 745,1395 755,1370 762,1320 785,1325 800,1300 820,1285 842,1268 855,1290 865,1365 880,1370 893,1395 900,1222 912,1225 925,1290 933,1355 945,1370 955,1400 962,1355 967,1338 975,1365 985,1395 1005,1425 1025,1385 1040,1385 1060,1375 1080,1355 1090,1320 1112,1270 1125,1310 1135,1345 1145,1385 1155,1350 1170,1305 1182,1355 1205,1362 1217,1345 1230,1310 1245,1300 1255,1345 1265,1360 1274,1415 1285,1365 1293,1330 1305,1345 1313,1370 1322,1420 1340,1458 1355,1420 1367,1351 1385,1340 1400,1310 1410,1302 1420,1340 1432,1390 1450,1395 1480,1360 1500,1330 1517,1305 1530,1340 1547,1350');

function drawMacd() {
    let s = '<path d="M18 797H1550V1500H18z" fill="none" stroke="#eaeaea" stroke-width="2"/>' + dash(18, 1550, 1148, '#e4e4e4', 2, '4 3');
    for (let x = 21; x < 1549; x += 3.73) {
        const y = at(hist, x, 1);
        s += y < 1351 ? bar(x, y, 1351, 3.3, RED) : bar(x, 1351, y, 3.3, '#529a34');
    }
    s += line(nums('20,1355 35,1368 48,1340 60,1370 75,1390 88,1370 100,1300 115,1250 130,1180 142,1150 152,1113 165,1145 178,1210 192,1225 210,1300 230,1370 250,1408 265,1405 277,1418 297,1388 310,1460 325,1480 340,1445 360,1395 378,1385 400,1395 420,1440 445,1447 460,1430 470,1380 480,1250 488,1100 494,980 500,948 510,990 520,1120 530,1165 540,1148 550,1130 560,1180 572,1225 585,1250 600,1340 612,1385 630,1435 655,1435 675,1372 690,1400 708,1430 722,1465 750,1500 770,1455 795,1430 815,1375 835,1320 855,1293 870,1325 893,1365 903,1240 925,1212 940,1250 948,1255 957,1285 970,1255 985,1290 1005,1360 1030,1365 1050,1395 1075,1418 1095,1390 1110,1325 1125,1310 1147,1360 1170,1308 1180,1325 1210,1335 1225,1310 1235,1270 1248,1260 1262,1290 1280,1330 1295,1300 1310,1300 1325,1380 1340,1445 1358,1462 1380,1430 1400,1395 1415,1380 1435,1420 1465,1440 1490,1430 1515,1395 1545,1405'), '#2b2b2b', 3);
    s += line(nums('20,1340 50,1355 85,1378 110,1330 135,1240 150,1170 165,1150 180,1175 200,1225 220,1300 240,1360 265,1395 300,1403 320,1440 335,1460 355,1430 380,1398 410,1398 435,1430 455,1440 470,1415 485,1310 497,1170 508,1080 515,1057 530,1110 545,1135 555,1135 575,1190 595,1250 610,1330 630,1390 655,1425 680,1395 705,1410 730,1450 760,1485 790,1455 825,1400 855,1320 893,1340 910,1280 930,1240 960,1265 980,1265 1000,1310 1030,1350 1060,1385 1080,1408 1100,1395 1120,1345 1135,1332 1150,1348 1175,1320 1215,1330 1235,1300 1255,1277 1275,1290 1290,1310 1310,1303 1330,1360 1350,1420 1370,1443 1395,1430 1420,1398 1450,1400 1545,1410'), '#e27a4c', 3);
    s += '<path d="M714 795V1500" stroke="#000" stroke-width="3.2"/>';
    document.getElementById('mdata').innerHTML = s;
}

drawKline();
drawMarks();
drawVolume();
drawMacd();
```
